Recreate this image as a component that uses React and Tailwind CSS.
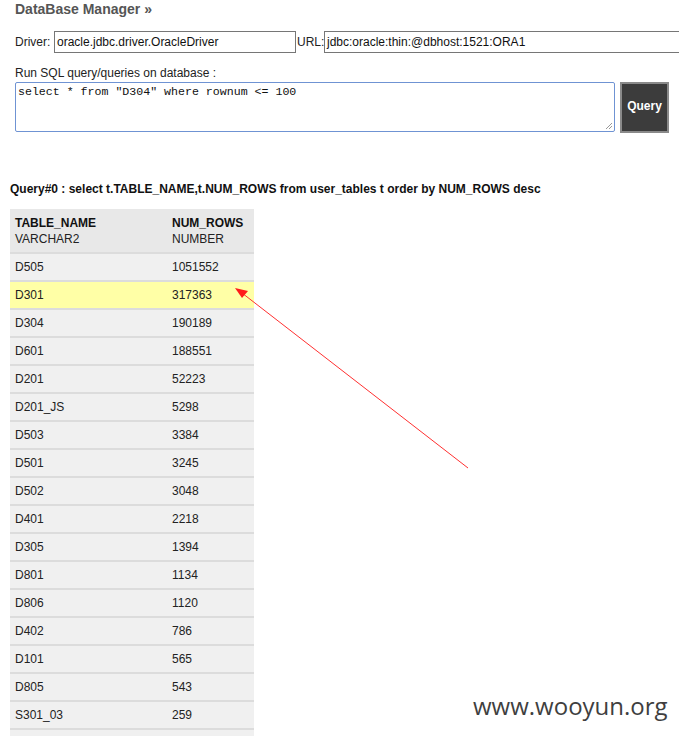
import React from "react"

const rows = [
  ["D505", "1051552"],
  ["D301", "317363"],
  ["D304", "190189"],
  ["D601", "188551"],
  ["D201", "52223"],
  ["D201_JS", "5298"],
  ["D503", "3384"],
  ["D501", "3245"],
  ["D502", "3048"],
  ["D401", "2218"],
  ["D305", "1394"],
  ["D801", "1134"],
  ["D806", "1120"],
  ["D402", "786"],
  ["D101", "565"],
  ["D805", "543"],
  ["S301_03", "259"],
  ["", ""],
]

export default function App() {
  return (
    <div className="relative w-[679px] h-[736px] overflow-hidden bg-white text-[12px] text-[#222] font-['Liberation_Sans',Arial,sans-serif]">

      {/* header */}
      <div className="pl-[15px] pt-[1px] h-[31px]">
        <h1 className="text-[14px] font-bold text-[#555] leading-[16px]">DataBase Manager »</h1>
      </div>

      {/* driver / url */}
      <div className="flex items-center pl-[15px] h-[22px]">
        <span className="w-[39px] shrink-0">Driver:</span>
        <div className="w-[242px] shrink-0 h-[22px] border border-[#767676] flex items-center px-[2px] text-[#111]">
          oracle.jdbc.driver.OracleDriver
        </div>
        <span className="w-[28px] shrink-0 pl-[1px]">URL:</span>
        <div className="w-[360px] shrink-0 h-[22px] border border-[#767676] flex items-center px-[2px] text-[#111]">
          jdbc:oracle:thin:@dbhost:1521:ORA1
        </div>
      </div>

      <div className="pl-[15px] pt-[13px] leading-[15px]">Run SQL query/queries on database :</div>

      <div className="flex pl-[15px] gap-[5px] pt-[1px]">
        <div className="relative w-[600px] h-[50px] border border-[#6f93d3] rounded-[2px] px-[2px] pt-[2px] font-['Liberation_Mono','Courier_New',monospace] text-[11.6px] leading-[13px] text-[#111] whitespace-pre">
          select * from "D304" where rownum &lt;= 100
          <svg className="absolute right-[1px] bottom-[1px]" width="8" height="8" viewBox="0 0 8 8">
            <path d="M7 1 L1 7 M7 4 L4 7" stroke="#999" strokeWidth="1" />
          </svg>
        </div>
        <button className="w-[49px] h-[51px] bg-[#3c3c3c] border-2 border-[#8a8a8a] text-white font-bold text-[12px] pb-[3px]">
          Query
        </button>
      </div>

      <div className="pl-[10px] pt-[49px] font-bold leading-[14px] text-[#111]">
        Query#0 : select t.TABLE_NAME,t.NUM_ROWS from user_tables t order by NUM_ROWS desc
      </div>

      {/* result table */}
      <div className="ml-[10px] mt-[13px] w-[244px]">
        <div className="flex bg-[#e8e8e8] h-[45px] pt-[6px] leading-[16px] border-b-2 border-[#dcdcdc]">
          <div className="w-[162px] pl-[5px]">
            <div className="font-bold text-[#111]">TABLE_NAME</div>
            <div>VARCHAR2</div>
          </div>
          <div>
            <div className="font-bold text-[#111]">NUM_ROWS</div>
            <div>NUMBER</div>
          </div>
        </div>
        {rows.map((r, i) => (
          <div
            key={i}
            className={
              "flex items-center h-[28px] border-b-2 border-[#dcdcdc] " +
              (r[0] === "D301" ? "bg-[#ffffa6]" : "bg-[#f0f0f0]")
            }
          >
            <div className="w-[162px] pl-[5px]">{r[0]}</div>
            <div>{r[1]}</div>
          </div>
        ))}
      </div>

      {/* annotation arrow */}
      <svg className="absolute left-0 top-0 pointer-events-none" width="679" height="736">
        <line x1="468" y1="468" x2="242" y2="293" stroke="#ff3030" strokeWidth="1" />
        <polygon points="235,288 248,291 242,298" fill="#ff1a1a" />
      </svg>

      {/* watermark */}
      <div className="absolute left-[473px] top-[692px] text-[24px] text-[#3f3f3f] font-['Open_Sans',sans-serif] leading-[28px]">
        www.wooyun.org
      </div>
    </div>
  )
}
